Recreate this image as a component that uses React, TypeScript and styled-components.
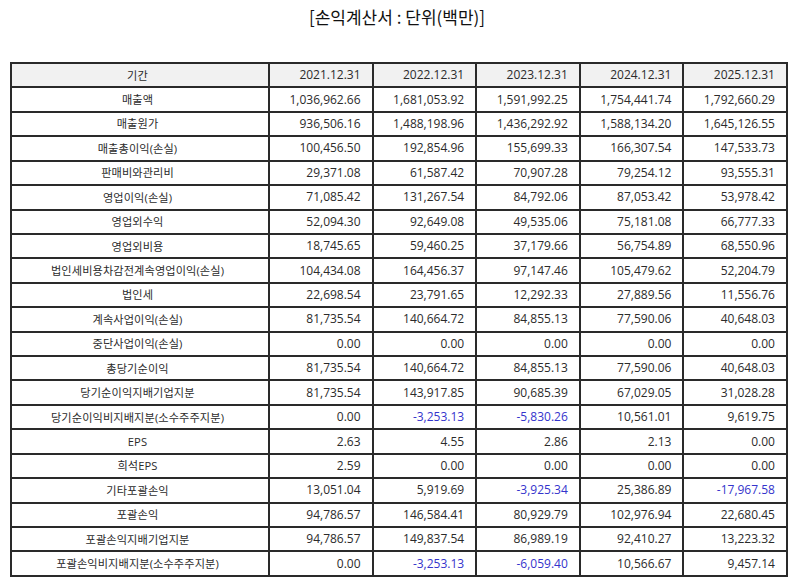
import React from 'react';
import styled, { createGlobalStyle } from 'styled-components';

const GlobalStyle = createGlobalStyle`
  html, body {
    margin: 0;
    padding: 0;
    background: #fff;
  }
  body {
    font-family: "Noto Sans CJK KR", "Noto Sans", sans-serif;
    color: #222;
  }
`;

const Page = styled.div`
  width: 794px;
  padding: 4px 0 0 10px;
  box-sizing: border-box;
`;

const Title = styled.h2`
  margin: 0 0 32px;
  padding-right: 10px;
  text-align: center;
  font-size: 17px;
  font-weight: 400;
  line-height: 26px;
  color: #111;
`;

const Table = styled.table`
  width: 776px;
  border-collapse: collapse;
  table-layout: fixed;
  font-family: "Open Sans", "Noto Sans CJK KR", sans-serif;
`;

const Row = styled.tr`
  height: 24.43px;
`;

const Cell = styled.td<{ $head?: boolean; $label?: boolean; $neg?: boolean }>`
  padding: 0 11px 0 6px;
  border: 2px solid #2a2a2a;
  background: ${({ $head }) => ($head ? '#f1f1f1' : '#fff')};
  text-align: ${({ $label }) => ($label ? 'center' : 'right')};
  color: ${({ $neg }) => ($neg ? '#3434cc' : '#2b2b2b')};
  font-size: ${({ $label }) => ($label ? '11.2px' : '12px')};
  font-weight: 400;
  letter-spacing: ${({ $label }) => ($label ? '0.1px' : '0')};
  white-space: nowrap;
  line-height: 1;
`;

const periods = ['2021.12.31', '2022.12.31', '2023.12.31', '2024.12.31', '2025.12.31'];

const rows: [string, string[]][] = [
  ['매출액', ['1,036,962.66', '1,681,053.92', '1,591,992.25', '1,754,441.74', '1,792,660.29']],
  ['매출원가', ['936,506.16', '1,488,198.96', '1,436,292.92', '1,588,134.20', '1,645,126.55']],
  ['매출총이익(손실)', ['100,456.50', '192,854.96', '155,699.33', '166,307.54', '147,533.73']],
  ['판매비와관리비', ['29,371.08', '61,587.42', '70,907.28', '79,254.12', '93,555.31']],
  ['영업이익(손실)', ['71,085.42', '131,267.54', '84,792.06', '87,053.42', '53,978.42']],
  ['영업외수익', ['52,094.30', '92,649.08', '49,535.06', '75,181.08', '66,777.33']],
  ['영업외비용', ['18,745.65', '59,460.25', '37,179.66', '56,754.89', '68,550.96']],
  ['법인세비용차감전계속영업이익(손실)', ['104,434.08', '164,456.37', '97,147.46', '105,479.62', '52,204.79']],
  ['법인세', ['22,698.54', '23,791.65', '12,292.33', '27,889.56', '11,556.76']],
  ['계속사업이익(손실)', ['81,735.54', '140,664.72', '84,855.13', '77,590.06', '40,648.03']],
  ['중단사업이익(손실)', ['0.00', '0.00', '0.00', '0.00', '0.00']],
  ['총당기순이익', ['81,735.54', '140,664.72', '84,855.13', '77,590.06', '40,648.03']],
  ['당기순이익지배기업지분', ['81,735.54', '143,917.85', '90,685.39', '67,029.05', '31,028.28']],
  ['당기순이익비지배지분(소수주주지분)', ['0.00', '-3,253.13', '-5,830.26', '10,561.01', '9,619.75']],
  ['EPS', ['2.63', '4.55', '2.86', '2.13', '0.00']],
  ['희석EPS', ['2.59', '0.00', '0.00', '0.00', '0.00']],
  ['기타포괄손익', ['13,051.04', '5,919.69', '-3,925.34', '25,386.89', '-17,967.58']],
  ['포괄손익', ['94,786.57', '146,584.41', '80,929.79', '102,976.94', '22,680.45']],
  ['포괄손익지배기업지분', ['94,786.57', '149,837.54', '86,989.19', '92,410.27', '13,223.32']],
  ['포괄손익비지배지분(소수주주지분)', ['0.00', '-3,253.13', '-6,059.40', '10,566.67', '9,457.14']],
];

export default function App() {
  return (
    <Page>
      <GlobalStyle />
      <Title>[손익계산서 : 단위(백만)]</Title>
      <Table>
        <colgroup>
          <col style={{ width: 258 }} />
          {periods.map((p) => (
            <col key={p} style={{ width: 103.6 }} />
          ))}
        </colgroup>
        <tbody>
          <Row>
            <Cell $head $label>기간</Cell>
            {periods.map((p) => (
              <Cell key={p} $head>{p}</Cell>
            ))}
          </Row>
          {rows.map(([label, values]) => (
            <Row key={label}>
              <Cell $label>{label}</Cell>
              {values.map((v, i) => (
                <Cell key={i} $neg={v.startsWith('-')}>{v}</Cell>
              ))}
            </Row>
          ))}
        </tbody>
      </Table>
    </Page>
  );
}
